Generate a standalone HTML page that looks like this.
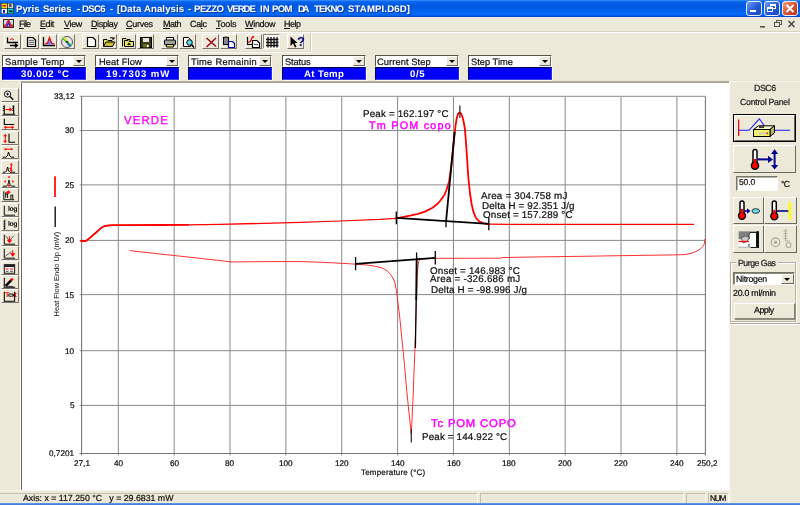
<!DOCTYPE html>
<html><head><meta charset="utf-8"><title>Pyris Series - DSC6</title>
<style>
*{box-sizing:border-box;margin:0;padding:0}
html,body{width:800px;height:505px;overflow:hidden;background:#ece9d8;font-family:"Liberation Sans","DejaVu Sans",sans-serif;font-size:9px;color:#000}
.a{position:absolute}
.t{white-space:pre;will-change:transform;text-rendering:geometricPrecision}
#title{left:0;top:0;width:800px;height:17px;background:linear-gradient(#3f94ff 0,#0b68f2 1.5px,#0560ea 3px,#0257df 5px,#025ae4 8px,#0364f0 11px,#0469f8 13.5px,#0466f4 15px,#034ad8 16.3px,#0340c8 17px)}
.tb{top:1px;width:16px;height:15px;border:1px solid #e8eefc;border-radius:3px;background:linear-gradient(135deg,#6a9cf8,#2458d8 55%,#1c48c0)}
.tb.x{background:linear-gradient(135deg,#f0a080,#d8502c 55%,#b83318)}
.hl{left:0;width:800px;height:1px}
.btn{top:34px;width:17px;height:15px;border:1px solid;border-color:#fff #77756a #77756a #fff;background:#ece9d8}
.btn.p{border-color:#8a8778 #fff #fff #8a8778;background:#f8f7f1}
.btn svg{position:absolute;left:0;top:-0.5px}.lb svg{position:absolute;left:-0.8px;top:0}
.ib{top:55px;width:84px;height:25px}
.c{left:0;top:0;width:84px;height:12px;background:#fff;border:1px solid;border-color:#55534a #fff #fff #55534a}
.c i{position:absolute;right:0;top:0;width:12px;height:10px;background:#ece9d8;border:1px solid;border-color:#fff #6a685e #6a685e #fff}
.c i:after{content:"";position:absolute;left:2px;top:3px;border:3px solid transparent;border-top:3px solid #000;border-bottom:0}
.v{left:0;top:12px;width:84px;height:13px;background:#0000fb;border:1px solid;border-color:#000050 #2a2af0 #4040e8 #000050;box-shadow:1px 1px 0 #fbfaf3}
.lb{left:1px;width:18px;height:14px;border:1px solid;border-color:#fff #77756a #77756a #fff;background:#ece9d8}
.rb{border:1px solid;border-color:#fff #6a685e #6a685e #fff;background:#ece9d8}
.sp{top:493px;height:11px;border:1px solid;border-color:#c4c1b0 #faf9f2 #faf9f2 #c4c1b0}
</style></head><body>
<div id="title" class="a">
<svg class="a" style="left:0.5px;top:2.5px" width="13" height="11" viewBox="0 0 13 11"><rect width="13" height="11" fill="#101830"/><rect x="0.5" y="0.5" width="5.5" height="4.700" fill="#f4e000"/><rect x="6.800" y="0.500" width="5.500" height="4.700" fill="#d4d4d4"/><rect x="0.500" y="5.800" width="5.500" height="4.700" fill="#f8f8f8"/><rect x="6.800" y="5.800" width="5.500" height="4.700" fill="#10d0c8"/><rect x="1.500" y="2" width="3.500" height="1.600" fill="#e02010"/><rect x="8" y="1" width="2.500" height="3" fill="#505050"/><rect x="2" y="7" width="2" height="2.800" fill="#1010d0"/><rect x="8" y="7.500" width="3.500" height="1.700" fill="#202020"/></svg>
<div class="a t" style="left:16.20px;top:4.00px;font-size:9.6px;line-height:11px;letter-spacing:0.016px;color:#fff;font-weight:bold;text-shadow:1px 1px 0 #123a9c;">Pyris</div>
<div class="a t" style="left:42.75px;top:4.00px;font-size:9.6px;line-height:11px;letter-spacing:-0.065px;color:#fff;font-weight:bold;text-shadow:1px 1px 0 #123a9c;">Series</div>
<div class="a t" style="left:76.80px;top:4.00px;font-size:9.6px;line-height:11px;letter-spacing:-0.196px;color:#fff;font-weight:bold;text-shadow:1px 1px 0 #123a9c;">-</div>
<div class="a t" style="left:82.20px;top:4.00px;font-size:9.6px;line-height:11px;letter-spacing:-0.686px;color:#fff;font-weight:bold;text-shadow:1px 1px 0 #123a9c;">DSC6</div>
<div class="a t" style="left:110.25px;top:4.00px;font-size:9.6px;line-height:11px;letter-spacing:-0.196px;color:#fff;font-weight:bold;text-shadow:1px 1px 0 #123a9c;">-</div>
<div class="a t" style="left:116.60px;top:4.00px;font-size:9.6px;line-height:11px;letter-spacing:0.104px;color:#fff;font-weight:bold;text-shadow:1px 1px 0 #123a9c;">[Data Analysis</div>
<div class="a t" style="left:187.50px;top:4.00px;font-size:9.6px;line-height:11px;letter-spacing:0.104px;color:#fff;font-weight:bold;text-shadow:1px 1px 0 #123a9c;">-</div>
<div class="a t" style="left:194.25px;top:4.00px;font-size:9.6px;line-height:11px;letter-spacing:-0.500px;color:#fff;font-weight:bold;text-shadow:1px 1px 0 #123a9c;">PEZZO</div>
<div class="a t" style="left:226.50px;top:4.00px;font-size:9.6px;line-height:11px;letter-spacing:-1.044px;color:#fff;font-weight:bold;text-shadow:1px 1px 0 #123a9c;">VERDE</div>
<div class="a t" style="left:259.60px;top:4.00px;font-size:9.6px;line-height:11px;letter-spacing:0.200px;color:#fff;font-weight:bold;text-shadow:1px 1px 0 #123a9c;">IN</div>
<div class="a t" style="left:272.25px;top:4.00px;font-size:9.6px;line-height:11px;letter-spacing:-0.658px;color:#fff;font-weight:bold;text-shadow:1px 1px 0 #123a9c;">POM</div>
<div class="a t" style="left:298.10px;top:4.00px;font-size:9.6px;line-height:11px;letter-spacing:-2.466px;color:#fff;font-weight:bold;text-shadow:1px 1px 0 #123a9c;">DA</div>
<div class="a t" style="left:314.40px;top:4.00px;font-size:9.6px;line-height:11px;letter-spacing:-0.900px;color:#fff;font-weight:bold;text-shadow:1px 1px 0 #123a9c;">TEKNO</div>
<div class="a t" style="left:348.20px;top:4.00px;font-size:9.6px;line-height:11px;letter-spacing:0.138px;color:#fff;font-weight:bold;text-shadow:1px 1px 0 #123a9c;">STAMPI.D6D]</div>
<div class="a tb" style="left:746px"><div class="a" style="left:3px;top:8px;width:6px;height:2px;background:#fff"></div></div>
<div class="a tb" style="left:764px"><div class="a" style="left:5px;top:2px;width:6px;height:5px;border:1px solid #fff;border-top-width:2px"></div><div class="a" style="left:2px;top:5px;width:6px;height:5px;border:1px solid #fff;border-top-width:2px;background:#2a5cd8"></div></div>
<div class="a tb x" style="left:782px"><svg class="a" style="left:0;top:0" width="14" height="13"><path d="M3.5 3L10.5 10M10.5 3L3.5 10" stroke="#fff" stroke-width="2"/></svg></div>
</div>
<svg class="a" style="left:3px;top:19px" width="11" height="9" viewBox="0 0 11 9"><rect x="0.500" y="0.500" width="10" height="8" fill="#c8dce8" stroke="#303030"/><path d="M1 6.500L3 6L5.500 1L8 6L10 6.500" stroke="#e81010" fill="none" stroke-width="1.300"/><path d="M3.500 8L5.500 4L7.500 8" stroke="#1010e0" fill="none" stroke-width="1.200"/><rect x="1" y="7.300" width="9" height="1" fill="#c00020"/></svg>
<div class="a t" style="left:19.40px;top:19.00px;font-size:9px;line-height:10px;letter-spacing:-0.800px;color:#111;-webkit-text-stroke:0.22px #111;"><u>F</u>ile</div>
<div class="a t" style="left:40.00px;top:19.00px;font-size:9px;line-height:10px;letter-spacing:-0.403px;color:#111;-webkit-text-stroke:0.22px #111;"><u>E</u>dit</div>
<div class="a t" style="left:64.00px;top:19.00px;font-size:9px;line-height:10px;letter-spacing:-0.348px;color:#111;-webkit-text-stroke:0.22px #111;"><u>V</u>iew</div>
<div class="a t" style="left:90.60px;top:19.00px;font-size:9px;line-height:10px;letter-spacing:-0.435px;color:#111;-webkit-text-stroke:0.22px #111;"><u>D</u>isplay</div>
<div class="a t" style="left:126.40px;top:19.00px;font-size:9px;line-height:10px;letter-spacing:-0.281px;color:#111;-webkit-text-stroke:0.22px #111;"><u>C</u>urves</div>
<div class="a t" style="left:163.00px;top:19.00px;font-size:9px;line-height:10px;letter-spacing:-0.502px;color:#111;-webkit-text-stroke:0.22px #111;"><u>M</u>ath</div>
<div class="a t" style="left:190.00px;top:19.00px;font-size:9px;line-height:10px;letter-spacing:-0.335px;color:#111;-webkit-text-stroke:0.22px #111;">Ca<u>l</u>c</div>
<div class="a t" style="left:216.00px;top:19.00px;font-size:9px;line-height:10px;letter-spacing:-0.127px;color:#111;-webkit-text-stroke:0.22px #111;"><u>T</u>ools</div>
<div class="a t" style="left:245.00px;top:19.00px;font-size:9px;line-height:10px;letter-spacing:-0.302px;color:#111;-webkit-text-stroke:0.22px #111;"><u>W</u>indow</div>
<div class="a t" style="left:284.00px;top:19.00px;font-size:9px;line-height:10px;letter-spacing:-0.503px;color:#111;-webkit-text-stroke:0.22px #111;"><u>H</u>elp</div>
<svg class="a" style="left:755px;top:18px" width="45" height="13"><rect x="5" y="8" width="5" height="1.6" fill="#555"/><rect x="21.5" y="2.5" width="5" height="4" fill="none" stroke="#555"/><rect x="19.5" y="4.5" width="5" height="4" fill="#ece9d8" stroke="#555"/><path d="M33.5 3L39.5 9M39.5 3L33.5 9" stroke="#444" stroke-width="1.5"/></svg>
<div class="a hl" style="top:31px;background:#d8d4c4"></div><div class="a hl" style="top:32px;background:#fff"></div>
<div class="a btn" style="left:3.5px"><svg width="16" height="14" viewBox="0 0 16 14"><path d="M2.5 2.5V7.5H13" stroke="#000" fill="none" stroke-width="1.3"/><path d="M5 4.5Q7 2.5 9 5" stroke="#e00000" fill="none"/><path d="M5 10.5H12M10 8.5L12.5 10.5L10 12.5" stroke="#000" fill="none" stroke-width="1.3"/></svg></div>
<div class="a btn" style="left:21.8px"><svg width="16" height="14" viewBox="0 0 16 14"><path d="M4.5 2.5H10L12.5 5V11.5H4.5Z" fill="#d8d8d8" stroke="#000" stroke-width="1.2"/><path d="M6 5.5H11M6 7.500H11M6 9.5H11" stroke="#777"/></svg></div>
<div class="a btn" style="left:40px"><svg width="16" height="14" viewBox="0 0 16 14"><path d="M2.500 2V10.5H14" stroke="#000" fill="none" stroke-width="1.3"/><path d="M4 9.500L6.500 8.500L8.500 3L10.500 8.500L13.500 9.500Z" fill="#6a7cff" stroke="none"/><path d="M4 9L6.500 8L8.500 2.500L10.500 8L13.500 9" stroke="#e80000" fill="none" stroke-width="1.2"/></svg></div>
<div class="a btn" style="left:58.3px"><svg width="16" height="14" viewBox="0 0 16 14"><circle cx="8" cy="7" r="5.500" fill="#e8e8e8" stroke="#555"/><path d="M4 3L12 11" stroke="#20c040" stroke-width="2.200"/><path d="M4.500 2.500L8 6" stroke="#f0e000" stroke-width="1.500"/><path d="M8.500 8.500L11.500 11.500" stroke="#2060ff" stroke-width="1.500"/><circle cx="8" cy="7" r="1.300" fill="#444"/></svg></div>
<div class="a btn" style="left:82px"><svg width="16" height="14" viewBox="0 0 16 14"><path d="M4.500 2.500H10L12.500 5V11.500H4.500Z" fill="#fff" stroke="#000" stroke-width="1.200"/></svg></div>
<div class="a btn" style="left:100.2px"><svg width="16" height="14" viewBox="0 0 16 14"><path d="M2.500 11.500V4.500H6L7 5.500H11V7" fill="#e8e060" stroke="#000"/><path d="M2.500 11.500L5 7H14L11.500 11.500Z" fill="#c8c030" stroke="#000"/><path d="M9 3Q11.500 1.500 13 4M13 4L13 2M13 4L11 4" stroke="#000" fill="none"/></svg></div>
<div class="a btn" style="left:118.5px"><svg width="16" height="14" viewBox="0 0 16 14"><path d="M2.500 11.500V3.500H6L7 4.500H10V6" fill="#e8e060" stroke="#000"/><path d="M4.500 11.500V5.500H8L9 6.500H13.500V11.500Z" fill="#e8e060" stroke="#000"/><path d="M9 7.500L11 10H7Z" fill="#000"/></svg></div>
<div class="a btn" style="left:136.8px"><svg width="16" height="14" viewBox="0 0 16 14"><rect x="2.500" y="2.500" width="11" height="10" fill="#3a3a10" stroke="#000"/><rect x="5" y="3" width="6" height="4" fill="#e8e8e8"/><rect x="5" y="9" width="6" height="3.500" fill="#6a6a20"/><rect x="9" y="10" width="1.500" height="2" fill="#fff"/></svg></div>
<div class="a btn" style="left:160.5px"><svg width="16" height="14" viewBox="0 0 16 14"><path d="M4.500 5V2.500H11.500V5" fill="#fff" stroke="#000"/><rect x="2.500" y="5" width="11" height="5" rx="1" fill="#a0a098" stroke="#000"/><path d="M4.500 9.500H11.500V12H4.500Z" fill="#e8e860" stroke="#000"/></svg></div>
<div class="a btn" style="left:178.8px"><svg width="16" height="14" viewBox="0 0 16 14"><path d="M3.500 2.500H8.500L10.500 4.500V11.500H3.500Z" fill="#fff" stroke="#000"/><circle cx="9.500" cy="7.500" r="2.800" fill="#60d8e8" stroke="#000"/><path d="M11.500 9.500L14 12.500" stroke="#000" stroke-width="1.600"/></svg></div>
<div class="a btn" style="left:202px"><svg width="16" height="14" viewBox="0 0 16 14"><path d="M3.500 3L13 11.500M13 3L3.500 12" stroke="#a00818" stroke-width="1.450" fill="none"/></svg></div>
<div class="a btn" style="left:220.4px"><svg width="16" height="14" viewBox="0 0 16 14"><rect x="2.500" y="2.500" width="5" height="7" fill="#888" stroke="#000"/><rect x="3.500" y="1.500" width="3" height="1.500" fill="#444"/><path d="M7.500 6.500H11.500L13.500 8.500V12.500H7.500Z" fill="#fff" stroke="#0000a0" stroke-width="1.200"/></svg></div>
<div class="a btn" style="left:245px"><svg width="16" height="14" viewBox="0 0 16 14"><path d="M1.500 2V9.500H7" stroke="#000" fill="none" stroke-width="1.200"/><path d="M2 7Q4 8 5.500 4T8 2.500" stroke="#e00000" fill="none" stroke-width="1.200"/><path d="M6.500 5.500H11L13.500 8V12.500H6.500Z" fill="#fff" stroke="#000" stroke-width="1.200"/><path d="M8 9.500H12" stroke="#555"/></svg></div>
<div class="a btn p" style="left:263.3px"><svg width="16" height="14" viewBox="0 0 16 14"><path d="M4 2V12.500M7 2V12.500M10 2V12.500M13 2V12.500M2 4.500H14.500M2 7.500H14.500M2 10.500H14.500" stroke="#111" stroke-width="1.300"/></svg></div>
<div class="a btn" style="left:287.3px"><svg width="16" height="14" viewBox="0 0 16 14"><path d="M2.500 1.500L2.500 11L5 8.500L7 12.500L8.500 11.700L6.500 8L9.500 8Z" fill="#000"/></svg><div class="a t" style="left:8.500px;top:0;font-size:13px;line-height:13px;font-weight:bold;color:#000090">?</div></div>
<div class="a" style="left:310px;top:33px;width:1px;height:19px;background:#d4d0c0"></div><div class="a" style="left:311px;top:33px;width:1px;height:20px;background:#fbfaf6"></div>
<div class="a hl" style="top:51px;background:#dedacc;width:311px"></div><div class="a hl" style="top:52px;background:#fbfaf6;width:312px"></div>
<div class="a ib" style="left:2px"><div class="a c"><i></i></div><div class="a v"></div></div>
<div class="a t" style="left:5.20px;top:57.00px;font-size:9.3px;line-height:10px;letter-spacing:0.271px;color:#111;-webkit-text-stroke:0.22px #111;">Sample Temp</div>
<div class="a t" style="left:20.90px;top:69.00px;font-size:9.6px;line-height:11px;letter-spacing:0.650px;color:#fff;font-weight:bold;">30.002 °C</div>
<div class="a ib" style="left:95px"><div class="a c"><i></i></div><div class="a v"></div></div>
<div class="a t" style="left:98.60px;top:57.00px;font-size:9.3px;line-height:10px;letter-spacing:0.105px;color:#111;-webkit-text-stroke:0.22px #111;">Heat Flow</div>
<div class="a t" style="left:105.70px;top:69.00px;font-size:9.6px;line-height:11px;letter-spacing:0.926px;color:#fff;font-weight:bold;">19.7303 mW</div>
<div class="a ib" style="left:188px"><div class="a c"><i></i></div><div class="a v"></div></div>
<div class="a t" style="left:191.40px;top:57.00px;font-size:9.3px;line-height:10px;letter-spacing:0.301px;color:#111;-webkit-text-stroke:0.22px #111;">Time Remainin</div>
<div class="a ib" style="left:281.5px"><div class="a c"><i></i></div><div class="a v"></div></div>
<div class="a t" style="left:285.00px;top:57.00px;font-size:9.3px;line-height:10px;letter-spacing:-0.153px;color:#111;-webkit-text-stroke:0.22px #111;">Status</div>
<div class="a t" style="left:304.00px;top:69.00px;font-size:9.6px;line-height:11px;letter-spacing:0.369px;color:#fff;font-weight:bold;">At Temp</div>
<div class="a ib" style="left:374.5px"><div class="a c"><i></i></div><div class="a v"></div></div>
<div class="a t" style="left:377.40px;top:57.00px;font-size:9.3px;line-height:10px;letter-spacing:0.080px;color:#111;-webkit-text-stroke:0.22px #111;">Current Step</div>
<div class="a t" style="left:409.70px;top:69.00px;font-size:9.6px;line-height:11px;letter-spacing:0.678px;color:#fff;font-weight:bold;">0/5</div>
<div class="a ib" style="left:467.5px"><div class="a c"><i></i></div><div class="a v"></div></div>
<div class="a t" style="left:470.70px;top:57.00px;font-size:9.3px;line-height:10px;letter-spacing:0.017px;color:#111;-webkit-text-stroke:0.22px #111;">Step Time</div>
<div class="a hl" style="top:80px;background:#e6e3d2;left:552px;width:248px"></div><div class="a" style="left:21px;top:81px;width:708px;height:1px;background:#b4b19e"></div><div class="a" style="left:0;top:81px;width:21px;height:1px;background:#e2dfce"></div>
<div class="a" style="left:20px;top:82px;width:1px;height:408px;background:#fff"></div>
<div class="a" style="left:21px;top:82px;width:1px;height:408px;background:#6a685e"></div>
<div class="a" style="left:22px;top:82px;width:707px;height:408px;background:#fff"></div><div class="a" style="left:21px;top:82px;width:708px;height:1px;background:#a29f8d"></div>
<svg class="a" style="left:0;top:0" width="800" height="505" viewBox="0 0 800 505" font-family="Liberation Sans, sans-serif">
<path d="M118.3 96.4V455.4M174.16 96.4V455.4M230.02 96.4V455.4M285.88 96.4V455.4M341.74 96.4V455.4M397.6 96.4V455.4M453.46 96.4V455.4M509.32 96.4V455.4M565.18 96.4V455.4M621.04 96.4V455.4M676.9 96.4V455.4M79.6 405.4H705.4M79.6 350.7H705.4M79.6 294.6H705.4M79.6 240.4H705.4M79.6 184.9H705.4M79.6 130.5H705.4" stroke="#898989" stroke-width="1" fill="none"/>
<path d="M79.6 96.4H705.4" stroke="#a0a0a0" stroke-width="1.15" fill="none"/>
<path d="M705.4 96.4V455.4M81.6 96.4V455.4M79.6 453.4H705.4" stroke="#747474" stroke-width="1.05" fill="none"/>
<polyline points="81,241 86,241 95,233.5 101,228 104,226.3 108,225.5 112,225.2 160,225 188,224.8" stroke="#ff0000" stroke-width="1.8" fill="none" stroke-linejoin="round" stroke-linecap="round"/>
<polyline points="188,224.8 220,224.4 300,222.4 340,221 380,219.4 396,218.3" stroke="#ff0000" stroke-width="1.25" fill="none" stroke-linejoin="round" stroke-linecap="round"/>
<polyline points="396,218.3 410,215.6 418,213.8 425,211.6 432.5,207.8 437,204.3 440,201 444.5,195 447,188.5 449.2,181 451,168 452.7,153.4 454.2,138 455.6,125 457,117 458.3,113.4 459.6,112.4 461,113.4 462.5,117 463.7,122 464.8,128 465.8,140 466.8,154 468.2,176 470,193.5 471.6,204 473.5,212.2 476,218 479.4,221.6 484,223.3 489,224.2" stroke="#ff0000" stroke-width="1.8" fill="none" stroke-linejoin="round" stroke-linecap="round"/>
<polyline points="489,224.2 520,224.4 600,224.4 693.5,224.4" stroke="#ff0000" stroke-width="1.3" fill="none" stroke-linejoin="round" stroke-linecap="round"/>
<polyline points="705,239 704.6,242 704,244.5 702.5,246.8 700.4,248.8 697,251 693.3,252.7 689,253.8 684,254.6 675,254.9 640,255.4 600,256 560,256.6 520,257.2 502,257.6 500,258.2 436,258.3 424,258.8 421,259.2 419.3,260.2 418.6,262 417.8,268 417.2,276.5 416.3,300 415.5,330 414.9,350 413.9,375 413.4,390 412.7,405 411.8,425 411.2,434 410.3,425 408.7,410 406.8,391 404.5,365 402,340 399.5,315 397.2,297 396.3,290 395.2,284 393.5,279 391,275 388,271.6 385,269.4 380,267.4 374,266 368,265.2 362,264.6 356,264.2 340,263.2 320,262.2 300,261.6 270,261.6 245,261.8 232,262 220,260.6 200,258.3 160,254 129.6,250.6" stroke="#ff3030" stroke-width="1" fill="none" stroke-linejoin="round"/>
<path d="M396.3 211.500V224.300M488.800 217.600V230.300M446 219.900V227.300 M355.600 257V270.200M435.300 251V264.500M416.600 252.500V258.500" stroke="#000" stroke-width="1.300" fill="none"/>
<path d="M396.3 217.800L488.800 223.900M355.600 263.900L435.300 257.800" stroke="#000" stroke-width="1.700" fill="none"/>
<path d="M446 222L454.600 132" stroke="#000" stroke-width="1.800" fill="none"/>
<path d="M416.700 258L416.200 300" stroke="#000" stroke-width="1.900" fill="none"/><path d="M416.200 300L415.400 348" stroke="#000" stroke-width="1.250" fill="none"/>
<path d="M459.900 105.500V118M411.300 429V442.500" stroke="#222" stroke-width="1.200" fill="none"/>
<path d="M55 176.300V197" stroke="#ff0000" stroke-width="1.700"/><path d="M55.200 206.400V227" stroke="#000" stroke-width="1.300"/>
<text transform="translate(58.800 316.400) rotate(-90)" font-size="8" fill="#111" textLength="84.600" lengthAdjust="spacingAndGlyphs">Heat Flow Endo Up (mW)</text>
</svg>
<div class="a t" style="left:53.78px;top:92.00px;font-size:8.2px;line-height:9px;letter-spacing:0.000px;color:#111;-webkit-text-stroke:0.22px #111;">33,12</div>
<div class="a t" style="left:65.18px;top:126.00px;font-size:8.2px;line-height:9px;letter-spacing:0.000px;color:#111;-webkit-text-stroke:0.22px #111;">30</div>
<div class="a t" style="left:65.18px;top:181.00px;font-size:8.2px;line-height:9px;letter-spacing:0.000px;color:#111;-webkit-text-stroke:0.22px #111;">25</div>
<div class="a t" style="left:65.18px;top:236.00px;font-size:8.2px;line-height:9px;letter-spacing:0.000px;color:#111;-webkit-text-stroke:0.22px #111;">20</div>
<div class="a t" style="left:65.18px;top:291.00px;font-size:8.2px;line-height:9px;letter-spacing:0.000px;color:#111;-webkit-text-stroke:0.22px #111;">15</div>
<div class="a t" style="left:65.18px;top:347.00px;font-size:8.2px;line-height:9px;letter-spacing:0.000px;color:#111;-webkit-text-stroke:0.22px #111;">10</div>
<div class="a t" style="left:69.74px;top:401.00px;font-size:8.2px;line-height:9px;letter-spacing:-0.000px;color:#111;-webkit-text-stroke:0.22px #111;">5</div>
<div class="a t" style="left:49.22px;top:449.00px;font-size:8.2px;line-height:9px;letter-spacing:0.000px;color:#111;-webkit-text-stroke:0.22px #111;">0,7201</div>
<div class="a t" style="left:73.52px;top:459.00px;font-size:8.2px;line-height:9px;letter-spacing:-0.000px;color:#111;-webkit-text-stroke:0.22px #111;">27,1</div>
<div class="a t" style="left:113.74px;top:459.00px;font-size:8.2px;line-height:9px;letter-spacing:-0.000px;color:#111;-webkit-text-stroke:0.22px #111;">40</div>
<div class="a t" style="left:169.60px;top:459.00px;font-size:8.2px;line-height:9px;letter-spacing:-0.000px;color:#111;-webkit-text-stroke:0.22px #111;">60</div>
<div class="a t" style="left:225.46px;top:459.00px;font-size:8.2px;line-height:9px;letter-spacing:-0.000px;color:#111;-webkit-text-stroke:0.22px #111;">80</div>
<div class="a t" style="left:279.04px;top:459.00px;font-size:8.2px;line-height:9px;letter-spacing:0.000px;color:#111;-webkit-text-stroke:0.22px #111;">100</div>
<div class="a t" style="left:334.90px;top:459.00px;font-size:8.2px;line-height:9px;letter-spacing:0.000px;color:#111;-webkit-text-stroke:0.22px #111;">120</div>
<div class="a t" style="left:390.76px;top:459.00px;font-size:8.2px;line-height:9px;letter-spacing:0.000px;color:#111;-webkit-text-stroke:0.22px #111;">140</div>
<div class="a t" style="left:446.62px;top:459.00px;font-size:8.2px;line-height:9px;letter-spacing:0.000px;color:#111;-webkit-text-stroke:0.22px #111;">160</div>
<div class="a t" style="left:502.48px;top:459.00px;font-size:8.2px;line-height:9px;letter-spacing:-0.000px;color:#111;-webkit-text-stroke:0.22px #111;">180</div>
<div class="a t" style="left:558.34px;top:459.00px;font-size:8.2px;line-height:9px;letter-spacing:-0.000px;color:#111;-webkit-text-stroke:0.22px #111;">200</div>
<div class="a t" style="left:614.20px;top:459.00px;font-size:8.2px;line-height:9px;letter-spacing:-0.000px;color:#111;-webkit-text-stroke:0.22px #111;">220</div>
<div class="a t" style="left:670.06px;top:459.00px;font-size:8.2px;line-height:9px;letter-spacing:-0.000px;color:#111;-webkit-text-stroke:0.22px #111;">240</div>
<div class="a t" style="left:696.74px;top:459.00px;font-size:8.2px;line-height:9px;letter-spacing:0.000px;color:#111;-webkit-text-stroke:0.22px #111;">250,2</div>
<div class="a t" style="left:361.30px;top:468.00px;font-size:8px;line-height:9px;letter-spacing:0.184px;color:#111;-webkit-text-stroke:0.22px #111;">Temperature (°C)</div>
<div class="a t" style="left:124.00px;top:115.00px;font-size:11.5px;line-height:12px;letter-spacing:1.044px;color:#ff00ff;-webkit-text-stroke:0.300px #ff00ff;">VERDE</div>
<div class="a t" style="left:362.70px;top:109.00px;font-size:9.8px;line-height:11px;letter-spacing:0.178px;color:#111;-webkit-text-stroke:0.22px #111;">Peak = 162.197 °C</div>
<div class="a t" style="left:368.70px;top:120.00px;font-size:10.8px;line-height:12px;letter-spacing:1.219px;color:#ff00ff;-webkit-text-stroke:0.45px #ff00ff;">Tm POM copo</div>
<div class="a t" style="left:481.20px;top:191.00px;font-size:9.8px;line-height:11px;letter-spacing:0.202px;color:#111;-webkit-text-stroke:0.22px #111;">Area = 304.758 mJ</div>
<div class="a t" style="left:481.70px;top:201.00px;font-size:9.8px;line-height:11px;letter-spacing:0.152px;color:#111;-webkit-text-stroke:0.22px #111;">Delta H = 92.351 J/g</div>
<div class="a t" style="left:483.20px;top:210.00px;font-size:9.8px;line-height:11px;letter-spacing:0.179px;color:#111;-webkit-text-stroke:0.22px #111;">Onset = 157.289 °C</div>
<div class="a t" style="left:430.30px;top:266.00px;font-size:9.8px;line-height:11px;letter-spacing:0.203px;color:#111;-webkit-text-stroke:0.22px #111;">Onset = 146.983 °C</div>
<div class="a t" style="left:430.30px;top:274.00px;font-size:9.8px;line-height:11px;letter-spacing:0.227px;color:#111;-webkit-text-stroke:0.22px #111;">Area = -326.686 mJ</div>
<div class="a t" style="left:431.00px;top:285.00px;font-size:9.8px;line-height:11px;letter-spacing:0.156px;color:#111;-webkit-text-stroke:0.22px #111;">Delta H = -98.996 J/g</div>
<div class="a t" style="left:430.90px;top:418.00px;font-size:11.3px;line-height:12px;letter-spacing:0.821px;color:#ff00ff;-webkit-text-stroke:0.45px #ff00ff;">Tc POM COPO</div>
<div class="a t" style="left:422.40px;top:432.00px;font-size:9.8px;line-height:11px;letter-spacing:0.160px;color:#111;-webkit-text-stroke:0.22px #111;">Peak = 144.922 °C</div>
<div class="a lb" style="top:87.50px"><svg width="16" height="13" viewBox="0 0 17 13"><circle cx="7" cy="5" r="3.300" fill="#fff" stroke="#000" stroke-width="1"/><path d="M5.500 5H8.500M7 3.500V6.500" stroke="#000"/><path d="M9.500 7.500L13 11" stroke="#000" stroke-width="1.400"/></svg></div>
<div class="a lb" style="top:101.92px"><svg width="16" height="13" viewBox="0 0 17 13"><path d="M3.500 2V11M13.500 2V11M2 11.500H15M2 3.500H4M2 5.500H4M2 7.500H4M12 3.500H14M12 5.500H14M12 7.500H14" stroke="#000" stroke-width="1.100"/><path d="M5 6.500H10" stroke="#f00" stroke-width="1.150"/><path d="M9 4L12 6.500L9 9Z" fill="#f00"/></svg></div>
<div class="a lb" style="top:116.34px"><svg width="16" height="13" viewBox="0 0 17 13"><path d="M3.500 1.500V7.500H14" stroke="#000" stroke-width="1.150" fill="none"/><path d="M5 10.500H12" stroke="#f00" stroke-width="1.100"/><path d="M5.500 8.500L3 10.500L5.500 12.500ZM11.500 8.500L14 10.500L11.500 12.500Z" fill="#f00"/></svg></div>
<div class="a lb" style="top:130.76px"><svg width="16" height="13" viewBox="0 0 17 13"><path d="M8.500 1.500V10.500H15" stroke="#000" stroke-width="1.150" fill="none"/><path d="M4.500 3V10" stroke="#f00" stroke-width="1.100"/><path d="M2.500 4L4.500 1.500L6.500 4ZM2.500 9L4.500 11.500L6.500 9Z" fill="#f00"/></svg></div>
<div class="a lb" style="top:145.18px"><svg width="16" height="13" viewBox="0 0 17 13"><path d="M2 11.500H5Q7 11.500 8 6Q9 11.500 11 11.500H14" stroke="#000" stroke-width="1" fill="none"/><path d="M4.500 3H11.500" stroke="#f00"/><path d="M5.500 1.500L3 3L5.500 4.500ZM10.500 1.500L13 3L10.500 4.500Z" fill="#f00"/></svg></div>
<div class="a lb" style="top:159.60px"><svg width="16" height="13" viewBox="0 0 17 13"><path d="M2 11.500H4.500Q6 11.500 7 6Q8 11.500 9.500 11.500H15" stroke="#000" stroke-width="1" fill="none"/><path d="M11 3V10" stroke="#f00"/><path d="M9.500 4L11 1.500L12.500 4ZM9.500 9L11 11.500L12.500 9ZM8.500 7.500L10.500 6V9Z" fill="#f00"/></svg></div>
<div class="a lb" style="top:174.02px"><svg width="16" height="13" viewBox="0 0 17 13"><path d="M2 11.500H5.500Q7.500 11.500 8.500 5Q9.500 11.500 11.500 11.500H15" stroke="#000" stroke-width="1" fill="none"/><path d="M7 2.500L8.500 0.500L10 2.500ZM7 10L8.500 12.500L10 10ZM5 5L3 6.500L5 8ZM12 5L14 6.500L12 8Z" fill="#f00"/></svg></div>
<div class="a lb" style="top:188.44px"><svg width="16" height="13" viewBox="0 0 17 13"><path d="M3 2V11H14M5 3V9M7 4V9M5 5H7M10.500 6V10.500M12.500 6V10.500M10.500 6H12.500" stroke="#000" stroke-width="1" fill="none"/><path d="M6 3H10M8.500 1.500L6 3L8.500 4.500Z" stroke="#f00" fill="#f00"/></svg></div>
<div class="a lb" style="top:202.86px"><svg width="16" height="13" viewBox="0 0 17 13"><path d="M3.500 1.500V11.500H15" stroke="#000" stroke-width="1" fill="none"/></svg><div class="a t" style="left:5.500px;top:2.500px;font-size:6.800px;line-height:8px;font-weight:bold;letter-spacing:-0.400px">log</div></div>
<div class="a lb" style="top:217.28px"><svg width="16" height="13" viewBox="0 0 17 13"><path d="M4 1.500V12M2.500 3.500H4M2.500 6H4M2.500 8.500H4M2.500 11H4" stroke="#000" stroke-width="1" fill="none"/></svg><div class="a t" style="left:5.500px;top:2.500px;font-size:6.800px;line-height:8px;font-weight:bold;letter-spacing:-0.400px">log</div></div>
<div class="a lb" style="top:231.70px"><svg width="16" height="13" viewBox="0 0 17 13"><path d="M3.500 1.500V11.500H15" stroke="#000" stroke-width="1" fill="none"/><path d="M5 2.500L9 8L13.500 2.500" stroke="#555" fill="none"/><path d="M9 3V8M7 7L9 10L11 7Z" stroke="#f00" fill="#f00"/></svg></div>
<div class="a lb" style="top:246.12px"><svg width="16" height="13" viewBox="0 0 17 13"><path d="M3.500 1.500V11.500H15" stroke="#000" stroke-width="1" fill="none"/><path d="M4.500 9.500L11 4.500" stroke="#555" fill="none"/><path d="M12.500 3V7.500M10.500 6.500L12.500 9.500L14.500 6.500Z" stroke="#f00" fill="#f00"/></svg></div>
<div class="a lb" style="top:260.54px"><svg width="16" height="13" viewBox="0 0 17 13"><rect x="3.500" y="2.500" width="11" height="9" fill="#fff" stroke="#000"/><rect x="3.500" y="2.500" width="11" height="2.500" fill="#222"/><path d="M5 7H8M9.500 7H13" stroke="#f00" stroke-width="1.100"/><path d="M5 9.500H8M9.500 9.500H13" stroke="#444" stroke-width="1.100"/></svg></div>
<div class="a lb" style="top:274.96px"><svg width="16" height="13" viewBox="0 0 17 13"><path d="M3.500 1.500V11.500H15" stroke="#000" stroke-width="1.100" fill="none"/><path d="M5 10L11 4" stroke="#000" stroke-width="2.600"/><path d="M10.500 4.500L12.500 2.500" stroke="#f00" stroke-width="2.600"/><path d="M5 11.500Q8 9.500 13 11" stroke="#333" fill="none"/></svg></div>
<div class="a lb" style="top:289.38px"><svg width="16" height="13" viewBox="0 0 17 13"><path d="M3.500 1.500V12M14.500 1.500V12M3.500 11.500H14.500" stroke="#000" stroke-width="1.100" fill="none"/></svg><div class="a t" style="left:3px;top:2px;font-size:7px;line-height:8px;font-weight:bold;letter-spacing:-0.700px;color:#f00">T<span style="color:#000">ex</span>t</div></div><div class="a" style="left:729px;top:81px;width:71px;height:422px;background:#ece9d8"></div>
<div class="a" style="left:729px;top:82px;width:1px;height:421px;background:#f7f5ed"></div><div class="a" style="left:730px;top:82px;width:1px;height:421px;background:#f1eee1"></div>
<div class="a" style="left:729px;top:81px;width:71px;height:1px;background:#f7f5ed"></div>
<div class="a t" style="left:753.80px;top:83.00px;font-size:8.8px;line-height:10px;letter-spacing:-0.425px;color:#222;-webkit-text-stroke:0.22px #222;">DSC6</div>
<div class="a t" style="left:740.00px;top:97.00px;font-size:8.8px;line-height:10px;letter-spacing:-0.285px;color:#222;-webkit-text-stroke:0.22px #222;">Control Panel</div>
<div class="a" style="left:733px;top:114px;width:63px;height:28px;border:1px solid #000"><div class="a rb" style="left:0;top:0;width:61px;height:26px"></div></div>
<svg class="a" style="left:733px;top:114px" width="63" height="28" viewBox="733 114 63 28"><path d="M738.600 119.500V136" stroke="#f00" stroke-width="1.200"/><path d="M738.600 130.300H749L759.400 118.800L765.500 127.500M774 130.300H790" stroke="#1818ff" stroke-width="1.100" fill="none"/><path d="M753.500 129.500L758.500 125.800H774.500L770 129.500Z" fill="#f4f4c8" stroke="#000" stroke-width="1"/><path d="M770 129.500L774.500 125.800V132.800L770 136.500Z" fill="#b8b860" stroke="#000" stroke-width="1"/><rect x="753.500" y="129.500" width="16.500" height="7" fill="#f0f070" stroke="#000" stroke-width="1"/><rect x="759" y="126.300" width="5" height="1.600" fill="#222"/><rect x="759" y="132.500" width="7" height="1.600" fill="#c8c8c8"/><rect x="766.500" y="132.500" width="1.600" height="1.600" fill="#f00"/></svg>
<div class="a rb" style="left:733px;top:145px;width:63px;height:28px"></div>
<svg class="a" style="left:733px;top:145px" width="63" height="28" viewBox="733 145 63 28"><path d="M753 165V151.500Q753 149.500 755 149.500Q757 149.500 757 151.500V165" fill="#fff" stroke="#000" stroke-width="1.500"/><circle cx="755" cy="165.600" r="3.600" fill="#f00" stroke="#000" stroke-width="1.400"/><rect x="753.800" y="159" width="2.400" height="5" fill="#f00"/><path d="M757.500 159.400H769" stroke="#000090" stroke-width="2"/><path d="M768 155.800L773 159.400L768 163Z" fill="#000090"/><path d="M774.600 152V167" stroke="#000090" stroke-width="2"/><path d="M771 154L774.600 149.300L778.200 154ZM771 165L774.600 169.500L778.200 165Z" fill="#000090"/></svg>
<div class="a" style="left:736px;top:176px;width:42px;height:15px;background:#fff;border:1px solid;border-color:#77756a #fff #fff #77756a;box-shadow:inset 1px 1px 0 #b8b5a6"></div>
<div class="a t" style="left:738.60px;top:177.00px;font-size:8.5px;line-height:10px;letter-spacing:-0.114px;color:#111;-webkit-text-stroke:0.22px #111;">50.0</div>
<div class="a t" style="left:780.50px;top:179.00px;font-size:8.8px;line-height:10px;letter-spacing:-0.874px;color:#111;-webkit-text-stroke:0.22px #111;">°C</div>
<div class="a rb" style="left:733px;top:197px;width:31px;height:27px"></div>
<div class="a rb" style="left:764px;top:197px;width:33px;height:27px"></div>
<div class="a rb" style="left:733px;top:225px;width:31px;height:28px"></div>
<div class="a rb" style="left:764px;top:225px;width:33px;height:28px"></div>
<svg class="a" style="left:733px;top:197px" width="64" height="56" viewBox="733 197 64 56">
<path d="M740 215V203Q740 201 742 201Q744 201 744 203V215" fill="#fff" stroke="#000" stroke-width="1.500"/><circle cx="742" cy="215.800" r="3.500" fill="#f00" stroke="#000" stroke-width="1.400"/><rect x="740.800" y="209" width="2.400" height="5.500" fill="#f00"/>
<path d="M744.500 211H748" stroke="#0000a0" stroke-width="1.600"/><path d="M747 208.200L750.500 211L747 213.800Z" fill="#0000a0"/><ellipse cx="755.800" cy="211" rx="3.800" ry="2.300" fill="#60e0e8" stroke="#333" stroke-width="1"/>
<path d="M772.300 215.500V203Q772.300 201 774.300 201Q776.300 201 776.300 203V215.500" fill="#fff" stroke="#000" stroke-width="1.500"/><circle cx="774.300" cy="216.300" r="3.500" fill="#f00" stroke="#000" stroke-width="1.400"/><rect x="773.100" y="210" width="2.400" height="5.500" fill="#f00"/>
<path d="M777 211H788.500" stroke="#000090" stroke-width="1.600"/><rect x="788.700" y="202.200" width="2.400" height="17.600" fill="#ffff00"/>
<rect x="738.600" y="231.300" width="20.400" height="16.700" fill="#fff"/><rect x="738.600" y="231.300" width="20.400" height="8" fill="#808080"/><path d="M749 239.300V234.500Q749 232.500 751 232.500H756.500V247.500H749V244" fill="#fff" stroke="#222" stroke-width="1"/><path d="M741 238L745.500 236L749.500 237.500L747 241.500L743 243Z" fill="#c8c8c8" stroke="#555" stroke-width="0.800"/><path d="M738.600 241.500H749" stroke="#f00" stroke-width="1.300"/><rect x="756.500" y="231.300" width="2.500" height="16.700" fill="#111"/><rect x="738.600" y="246.500" width="12" height="1.500" fill="#c0c0c0"/>
<circle cx="775.500" cy="242.300" r="4.300" fill="none" stroke="#b4b0a0" stroke-width="1.300"/><circle cx="775.500" cy="242.300" r="1.800" fill="#b4b0a0"/><circle cx="788.500" cy="245" r="2.500" fill="none" stroke="#b4b0a0" stroke-width="1.200"/><path d="M785.500 229V241M783.500 231H787.500M783.500 233.500H787.500M783.500 236H787.500M783.500 238.500H787.500M785.500 241H790" stroke="#b4b0a0" stroke-width="1" fill="none"/>
</svg>
<div class="a" style="left:731px;top:263px;width:66px;height:60px;border:1px solid #fff"></div>
<div class="a" style="left:730px;top:262px;width:66px;height:60px;border:1px solid #b4b1a0"></div>
<div class="a" style="left:736px;top:257px;width:42px;height:10px;background:#ece9d8"></div>
<div class="a t" style="left:738.00px;top:258.00px;font-size:8.8px;line-height:10px;letter-spacing:-0.508px;color:#222;-webkit-text-stroke:0.22px #222;">Purge Gas</div>
<div class="a" style="left:733px;top:272px;width:62px;height:13px;background:#fff;border:1px solid;border-color:#77756a #fff #fff #77756a;box-shadow:inset 1px 1px 0 #8a8878"></div>
<div class="a" style="left:780.500px;top:273.500px;width:13px;height:10.500px;background:#ece9d8;border:1px solid;border-color:#fff #6a685e #6a685e #fff"><div class="a" style="left:2.500px;top:3px;border:3px solid transparent;border-top:3.500px solid #000;border-bottom:0"></div></div>
<div class="a t" style="left:735.80px;top:274.00px;font-size:8.8px;line-height:10px;letter-spacing:-0.294px;color:#111;-webkit-text-stroke:0.22px #111;">Nitrogen</div>
<div class="a t" style="left:733.00px;top:288.00px;font-size:8.8px;line-height:10px;letter-spacing:-0.248px;color:#111;-webkit-text-stroke:0.22px #111;">20.0 ml/min</div>
<div class="a rb" style="left:733.500px;top:303px;width:61.500px;height:16px;border-color:#fff #8a8778 #8a8778 #fff;box-shadow:1px 1px 0 #8f8c80"></div>
<div class="a t" style="left:753.90px;top:305.00px;font-size:8.8px;line-height:10px;letter-spacing:-0.478px;color:#111;-webkit-text-stroke:0.22px #111;">Apply</div>
<div class="a" style="left:730px;top:323px;width:70px;height:1px;background:#aca899"></div><div class="a" style="left:730px;top:324px;width:70px;height:1px;background:#fff"></div>
<div class="a" style="left:0;top:490px;width:729px;height:13px;background:#ece9d8"></div>
<div class="a" style="left:0;top:490px;width:729px;height:1px;background:#f6f4ec"></div>
<div class="a sp" style="left:0px;width:478px;border-left:0"></div><div class="a sp" style="left:480px;width:204px"></div><div class="a sp" style="left:686px;width:20px"></div><div class="a sp" style="left:708px;width:21px"></div>
<div class="a t" style="left:22.50px;top:493.00px;font-size:8.8px;line-height:10px;letter-spacing:-0.016px;color:#111;-webkit-text-stroke:0.22px #111;">Axis: x = 117.250 °C   y = 29.6831 mW</div>
<div class="a t" style="left:709.70px;top:493.00px;font-size:8.3px;line-height:10px;letter-spacing:-1.301px;color:#111;-webkit-text-stroke:0.22px #111;">NUM</div>
<div class="a" style="left:0;top:503px;width:800px;height:2px;background:linear-gradient(#6a9cec,#3a74d8)"></div>
</body></html>
